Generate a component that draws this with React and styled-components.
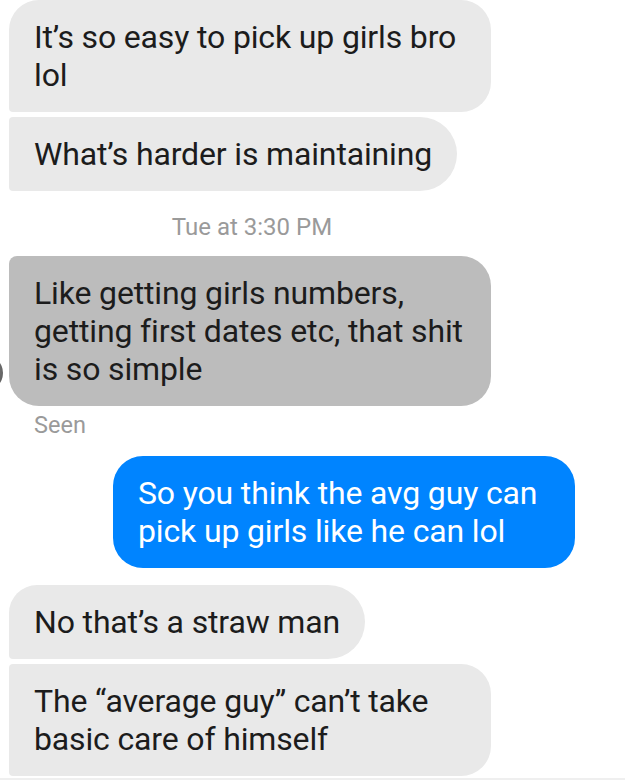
import React from 'react'
import styled, { createGlobalStyle } from 'styled-components'

const GlobalStyle = createGlobalStyle`
  html, body {
    margin: 0;
    padding: 0;
    background: #fff;
  }
  body {
    font-family: Roboto, "Liberation Sans", Arial, sans-serif;
    -webkit-font-smoothing: antialiased;
  }
`

const messages = [
  { type: 'in', text: 'It’s so easy to pick up girls bro lol', corners: '30px 30px 30px 4px' },
  { type: 'in', text: 'What’s harder is maintaining', corners: '4px 37px 37px 4px', gap: 5 },
  { type: 'time', text: 'Tue at 3:30 PM' },
  { type: 'in', text: 'Like getting girls numbers, getting first dates etc, that shit is so simple', corners: '8px 30px 30px 30px', tone: 'dark', avatar: true },
  { type: 'seen', text: 'Seen' },
  { type: 'out', text: 'So you think the avg guy can pick up girls like he can lol' },
  { type: 'in', text: 'No that’s a straw man', corners: '28px 37px 37px 4px', gap: 17 },
  { type: 'in', text: 'The “average guy” can’t take basic care of himself', corners: '4px 30px 30px 4px', gap: 5 },
]

const App = () => {
  return (
    <>
      <GlobalStyle />
      <Thread>
        {messages.map((m, i) => {
          if (m.type === 'time') return <Timestamp key={i}>{m.text}</Timestamp>
          if (m.type === 'seen') return <Seen key={i}>{m.text}</Seen>
          if (m.type === 'out') {
            return (
              <OutRow key={i}>
                <OutBubble>{m.text}</OutBubble>
              </OutRow>
            )
          }
          return (
            <InRow key={i} $gap={m.gap}>
              {m.avatar && <Avatar />}
              <InBubble $corners={m.corners} $tone={m.tone}>
                {m.text}
              </InBubble>
            </InRow>
          )
        })}
      </Thread>
      <Composer />
    </>
  )
}

export default App

const Thread = styled.div`
  display: flex;
  flex-direction: column;
  width: 625px;
  height: 778px;
  overflow: hidden;
  box-sizing: border-box;
  padding-left: 9px;
`

const InRow = styled.div`
  display: flex;
  align-items: flex-end;
  margin-top: ${p => p.$gap ?? 0}px;
`

const Avatar = styled.div`
  width: 36px;
  height: 36px;
  flex: none;
  border-radius: 50%;
  margin-left: -42px;
  margin-right: 6px;
  margin-bottom: 15px;
  background: radial-gradient(circle at 60% 45%, #8a8a8a, #3c3c3c);
`

const InBubble = styled.div`
  max-width: 432px;
  padding: 18px 25px;
  font-size: 32px;
  line-height: 38px;
  letter-spacing: -0.15px;
  color: #1c1c1c;
  background: ${p => (p.$tone === 'dark' ? '#bcbcbc' : '#e9e9e9')};
  border-radius: ${p => p.$corners};
`

const Timestamp = styled.div`
  width: 486px;
  margin: 22px 0 0;
  height: 43px;
  text-align: center;
  font-size: 24px;
  line-height: 28px;
  color: #9a9a9a;
`

const Seen = styled.div`
  margin: 5px 0 0 25px;
  font-size: 23.5px;
  line-height: 28px;
  color: #9a9a9a;
`

const OutRow = styled.div`
  display: flex;
  justify-content: flex-end;
  padding-right: 50px;
  margin-top: 17px;
`

const OutBubble = styled.div`
  max-width: 412px;
  padding: 18px 25px;
  font-size: 32px;
  line-height: 38px;
  letter-spacing: -0.15px;
  color: #fff;
  background: #0084ff;
  border-radius: 30px;
`

const Composer = styled.div`
  height: 2px;
  background: #efefef;
`
